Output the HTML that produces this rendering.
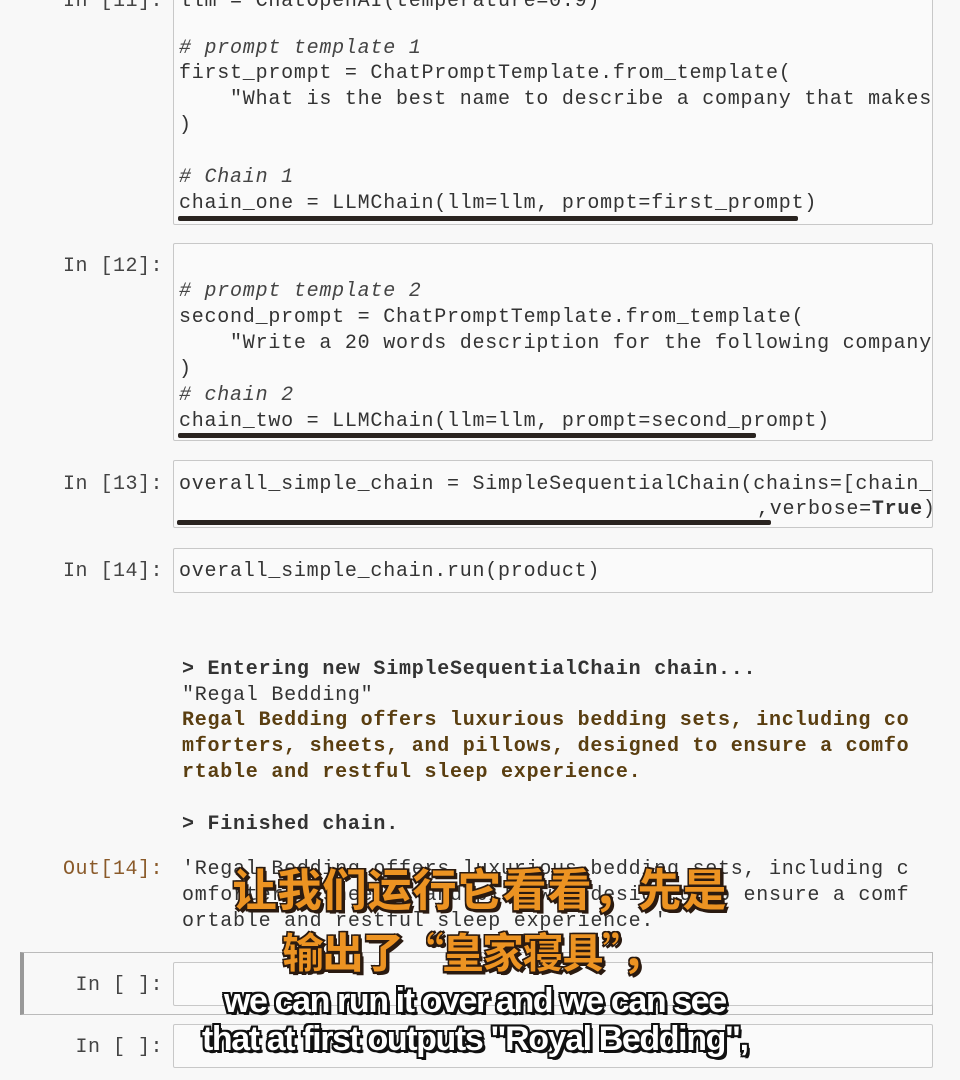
<!DOCTYPE html>
<html><head><meta charset="utf-8"><style>
*{margin:0;padding:0;box-sizing:border-box}
body{width:960px;height:1080px;background:#f8f8f8;position:relative;overflow:hidden;font-family:"Liberation Mono",monospace;color:#333}
.box{position:absolute;left:173px;width:760px;border:1px solid #c8c8c8;border-radius:2px;background:#fafafa}
.l{position:absolute;white-space:pre;font-size:20px;letter-spacing:0.76px;line-height:26px;height:26px;margin-top:2px}
.c{left:179px}
.o{left:182px}
.p{position:absolute;right:797px;white-space:pre;font-size:20px;letter-spacing:0.5px;line-height:26px;color:#444;margin-top:2px}
.out{color:#8a5a2a}
i{font-style:italic;color:#444}
.bar{position:absolute;height:5px;background:#2a2420;border-radius:2px}
.b{font-weight:bold}
.br{font-weight:bold;color:#5a3e10}
.zh{position:absolute;font-family:"Noto Sans CJK SC","WenQuanYi Zen Hei",sans-serif;font-weight:900;font-size:45px;color:#ec9322;white-space:nowrap;-webkit-text-stroke:1px #2a1a10;text-shadow:3px 3px 0 #2a1a10,-1px -1px 0 #2a1a10,2px -1px 0 #2a1a10,-1px 2px 0 #2a1a10}
.en{position:absolute;font-family:"Liberation Sans",sans-serif;font-weight:bold;font-size:34px;color:#fff;white-space:nowrap;letter-spacing:-1.4px;text-shadow:2px 2px 0 #111,-2px -2px 0 #111,2px -2px 0 #111,-2px 2px 0 #111,3px 3px 0 #111,0 2px 0 #111,2px 0 0 #111,0 -2px 0 #111,-2px 0 0 #111}
</style></head><body>

<div class="box" style="top:-10px;height:235px"></div>
<div class="p" style="top:-13px">In [11]:</div>
<div class="l c" style="top:-13px">llm = ChatOpenAI(temperature=0.9)</div>
<div class="l c" style="top:34px"><i># prompt template 1</i></div>
<div class="l c" style="top:59px">first_prompt = ChatPromptTemplate.from_template(</div>
<div class="l c" style="top:85px">    "What is the best name to describe a company that makes</div>
<div class="l c" style="top:111px">)</div>
<div class="l c" style="top:163px"><i># Chain 1</i></div>
<div class="l c" style="top:189px">chain_one = LLMChain(llm=llm, prompt=first_prompt)</div>
<div class="bar" style="left:178px;top:216px;width:620px"></div>

<div class="box" style="top:243px;height:198px"></div>
<div class="p" style="top:252px">In [12]:</div>
<div class="l c" style="top:277px"><i># prompt template 2</i></div>
<div class="l c" style="top:303px">second_prompt = ChatPromptTemplate.from_template(</div>
<div class="l c" style="top:329px">    "Write a 20 words description for the following company</div>
<div class="l c" style="top:355px">)</div>
<div class="l c" style="top:381px"><i># chain 2</i></div>
<div class="l c" style="top:407px">chain_two = LLMChain(llm=llm, prompt=second_prompt)</div>
<div class="bar" style="left:178px;top:433px;width:578px"></div>

<div class="box" style="top:460px;height:68px"></div>
<div class="p" style="top:470px">In [13]:</div>
<div class="l c" style="top:470px">overall_simple_chain = SimpleSequentialChain(chains=[chain_</div>
<div class="l" style="top:495px;left:757px">,verbose=<b>True</b>)</div>
<div class="bar" style="left:177px;top:520px;width:594px"></div>

<div class="box" style="top:548px;height:45px"></div>
<div class="p" style="top:557px">In [14]:</div>
<div class="l c" style="top:557px">overall_simple_chain.run(product)</div>

<div class="l o b" style="top:655px">&gt; Entering new SimpleSequentialChain chain...</div>
<div class="l o" style="top:681px">"Regal Bedding"</div>
<div class="l o br" style="top:706px">Regal Bedding offers luxurious bedding sets, including co</div>
<div class="l o br" style="top:732px">mforters, sheets, and pillows, designed to ensure a comfo</div>
<div class="l o br" style="top:758px">rtable and restful sleep experience.</div>
<div class="l o b" style="top:810px">&gt; Finished chain.</div>

<div class="p out" style="top:855px">Out[14]:</div>
<div class="l o" style="top:855px">'Regal Bedding offers luxurious bedding sets, including c</div>
<div class="l o" style="top:881px">omforters, sheets, and pillows, designed to ensure a comf</div>
<div class="l o" style="top:907px">ortable and restful sleep experience.'</div>

<div style="position:absolute;left:20px;top:952px;width:913px;height:63px;border:1px solid #bbb;border-left:4px solid #999;background:#f8f8f8"></div>
<div class="box" style="top:962px;height:44px"></div>
<div class="p" style="top:971px">In [ ]:</div>
<div class="box" style="top:1024px;height:44px"></div>
<div class="p" style="top:1033px">In [ ]:</div>

<div class="zh" style="left:232px;top:854px">让我们运行它看看，先是</div>
<div class="zh" style="left:282px;top:920px;font-size:42px;letter-spacing:-2px">输出了“皇家寝具”，</div>
<div class="en" style="left:224px;top:982px">we can run it over and we can see</div>
<div class="en" style="left:202px;top:1020px">that at first outputs "Royal Bedding",</div>
</body></html>
